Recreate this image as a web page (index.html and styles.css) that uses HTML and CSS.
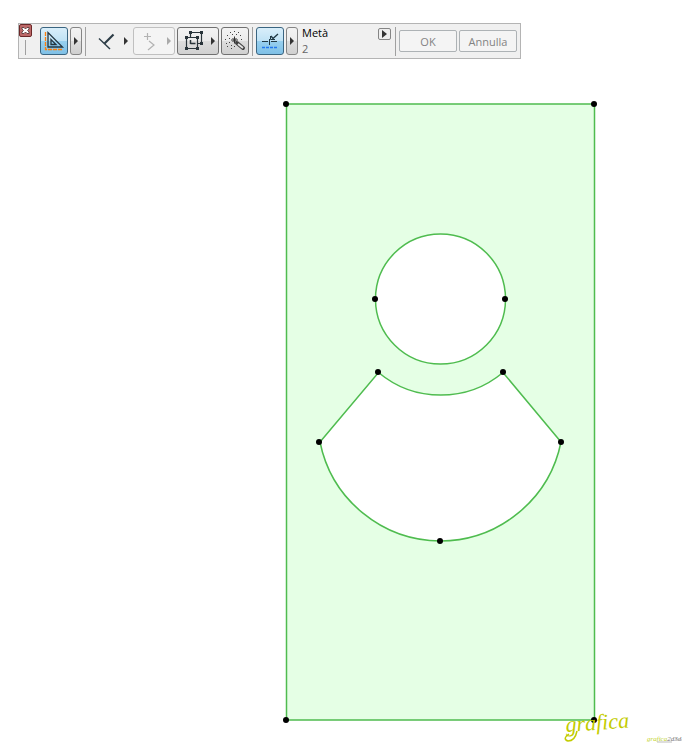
FILE: index.html
```
<!DOCTYPE html>
<html lang="it">
<head>
<meta charset="utf-8">
<title>Metà</title>
<link rel="stylesheet" href="styles.css">
</head>
<body>
<header class="top">
  <div class="toolbar" role="toolbar">
    <div class="grip">
      <button class="close" aria-label="Chiudi"><svg width="11" height="11" viewBox="0 0 11 11"><path d="M2 2.500h2l1.500 1.500L7 2.500h2v1.500L7.500 5.500 9 7v1.500H7L5.500 7 4 8.500H2V7l1.500-1.500L2 4z" fill="#fff" stroke="#4b3030" stroke-width=".8"/></svg></button>
      <span class="grip-line"></span>
    </div>
    <button class="tool active" aria-label="Squadra"><svg width="26" height="26" viewBox="0 0 26 26" fill="none"><path d="M4.500 4v17.500H22" stroke="#ff7f0a" stroke-width="1.300" stroke-dasharray="4 1"/><path d="M7 4.500v14.500h14.500zM10 11.500v5h5z" stroke="#233540" stroke-width="1.300"/></svg></button>
    <button class="arrow" aria-label="Opzioni squadra"><svg width="4" height="8" viewBox="0 0 4 8"><path d="M0 0l4 4-4 4z"/></svg></button>
    <span class="divider"></span>
    <button class="tool flat" aria-label="Perpendicolare"><svg width="42" height="26" viewBox="0 0 42 26" fill="none" stroke="#2c3c46"><path d="M15.500 15.500l9-9" stroke-width="2.200"/><path d="M10 10.500l11 10.500" stroke-width="1.400"/><path d="M35 9l4 4-4 4z" fill="#333" stroke="none"/></svg></button>
    <button class="tool wide" disabled aria-label="Polilinea"><svg width="40" height="26" viewBox="0 0 40 26" fill="none" stroke="#b2b2b2"><path d="M13.500 5v7M10 8.500h7M15 13l5 4-6 5" stroke-width="1.200"/><path d="M33 9l4 4-4 4z" fill="#aaa" stroke="none"/></svg></button>
    <button class="tool wide framed" aria-label="Gruppo"><svg width="40" height="26" viewBox="0 0 40 26" fill="none" stroke="#29343a"><path d="M12.500 9V4.500h11v11H20M8.500 9.500h11v11h-11z" stroke-width="1.200"/><path d="M12.500 12v4M12.500 15.500h5" stroke-width="1.500"/><path d="M11 3h3v3h-3zM22 3h3v3h-3zM22 14h3v3h-3zM7 8h3v3H7zM18 8h3v3h-3zM7 19h3v3H7zM18 19h3v3h-3z" fill="#29343a" stroke="none"/><path d="M33 9l4 4-4 4z" fill="#333" stroke="none"/></svg></button>
    <button class="tool framed" aria-label="Bacchetta magica"><svg width="26" height="26" viewBox="0 0 26 26" fill="none"><path d="M15 15l6 5" stroke="#444" stroke-width="4" stroke-linecap="round"/><path d="M16 16l5 4" stroke="#e4e4e4" stroke-width="1.800"/><path d="M12.500 8.500v7M9 12h7M10.500 10l4.500 4.500M14.500 10l-4 4" stroke="#333"/><path d="M8 4.500h1M12 3.500h1M16 4.500h1M5 7.500h1M10 6.500h1M14 6.500h1M18 7.500h1M3 11.500h1M7 10.500h1M19 11.500h1M4 15.500h1M7 14.500h1M5 18.500h1M9 17.500h1M9 20.500h1M12 18.500h1" stroke="#444"/></svg></button>
    <span class="divider"></span>
    <button class="tool active" aria-label="Metà"><svg width="26" height="26" viewBox="0 0 26 26" fill="none"><path d="M5 13.500h6M14 13.500h6M12.500 11v6M13.500 8v3.500H18" stroke="#203844"/><path d="M14 8l2 2.500 5-4.500" stroke="#203844" stroke-width="1.300"/><path d="M5 19.500h16" stroke="#2277ee" stroke-width="1.300" stroke-dasharray="3 1"/></svg></button>
    <button class="arrow" aria-label="Opzioni divisione"><svg width="4" height="8" viewBox="0 0 4 8"><path d="M0 0l4 4-4 4z"/></svg></button>
    <div class="mode"><span>Metà</span><span class="count">2</span></div>
    <button class="more" aria-label="Altro"><svg width="5" height="8" viewBox="0 0 5 8"><path d="M0 0l5 4-5 4z"/></svg></button>
    <span class="divider"></span>
    <div class="actions">
      <button class="action" disabled>OK</button>
      <button class="action" disabled>Annulla</button>
    </div>
  </div>
</header>
<main>
  <svg class="drawing" viewBox="0 0 683 684">
    <g class="shape">
      <path class="area" d="M286.500 45H594.500V661H286.500z"/>
      <circle cx="440.500" cy="240" r="65"/>
      <path d="M378.500 313.500A97 97 0 0 0 503 313.500L561 383A123.500 123.500 0 0 1 440.500 482A123.500 123.500 0 0 1 320 383z"/>
    </g>
    <g class="nodes">
      <circle cx="286" cy="45" r="3"/><circle cx="594" cy="45" r="3"/>
      <circle cx="375" cy="240" r="3"/><circle cx="505" cy="240" r="3"/>
      <circle cx="378" cy="313" r="3"/><circle cx="503" cy="313" r="3"/>
      <circle cx="319" cy="383" r="3"/><circle cx="561" cy="383" r="3"/>
      <circle cx="440" cy="482" r="3"/>
      <circle cx="286" cy="661" r="3"/><circle cx="594" cy="661" r="3"/>
    </g>
    <text class="mark" transform="translate(566 673) rotate(-4)">grafica</text>
    <path class="swash" d="M577 672Q575 682 568 682Q562 680 569 675"/>
    <text class="mini" x="647" y="682">grafica<tspan class="mini-tail">2d3d</tspan></text>
    <path class="rule" d="M657 683h15M675 681h7"/>
  </svg>
</main>
</body>
</html>
```
FILE: styles.css
```
* { box-sizing: border-box; }
body { margin: 0; background: #fff; font-family: "Open Sans", "Noto Sans", sans-serif; font-size: 11px; }
.top { display: flex; padding: 23px 18px 0; }
.toolbar { display: flex; align-items: center; gap: 2px; height: 36px; padding: 0 3px 0 0; background: #f0f0f0; border: 1px solid #b4b4b4; }
button { display: flex; align-items: center; justify-content: center; flex: none; margin: 0; padding: 0; font: inherit; }
svg { display: block; flex: none; }
.grip { display: flex; flex-direction: column; align-items: center; gap: 3px; width: 13px; height: 34px; margin-right: 6px; }
.close { width: 13px; height: 13px; background: #bd6868; border: 1px solid #6c2828; border-radius: 2px; }
.grip-line { width: 1px; height: 15px; background: #a0a0a0; }
.tool { width: 28px; height: 28px; border: 1px solid #aaa; border-radius: 3px; background: #f0f0f0; }
.active { border-color: #3a6581; background: linear-gradient(#d9eefa, #bfe2f5 50%, #98d0ef 50%, #7fc0e6); }
.flat { width: 42px; border: 0; background: none; }
.wide { width: 42px; }
.tool:disabled { border-color: #c0c0c0; background: #f4f4f4; }
.framed { border-color: #707070; background: linear-gradient(#f3f3f3, #ebebeb 50%, #dddddd 50%, #d0d0d0); }
.arrow { width: 12px; height: 28px; border: 1px solid #858585; border-radius: 3px; background: linear-gradient(#f3f3f3, #ebebeb 50%, #dddddd 50%, #d0d0d0); }
.arrow svg, .more svg { fill: #333; }
.divider { width: 1px; height: 29px; margin: 0 1px; background: #a0a0a0; }
.mode { display: flex; flex-direction: column; width: 74px; margin-left: 2px; line-height: 16px; color: #000; }
.count { color: #666; }
.more { align-self: flex-start; width: 13px; height: 12px; margin-top: 4px; margin-right: 1px; border: 1px solid #858585; border-radius: 2px; background: #eee; }
.actions { display: flex; gap: 2px; }
.action { width: 58px; height: 22px; border: 1px solid #adb2b5; border-radius: 2px; background: #f4f4f4; color: #838383; }
.drawing { width: 100%; height: auto; }
.shape { fill: #fff; stroke: #4fbc4f; stroke-width: 1.5px; }
.area { fill: #e5ffe5; }
.nodes { fill: #000; }
.mark { font: italic 22px "Liberation Serif", serif; fill: #c3cc00; }
.swash { fill: none; stroke: #c3cc00; stroke-width: 1.5px; }
.mini { font: italic 7px "Liberation Serif", serif; fill: #c3d32e; }
.mini-tail { fill: #777; }
.rule { stroke: #bbb; stroke-width: 1px; }
```
